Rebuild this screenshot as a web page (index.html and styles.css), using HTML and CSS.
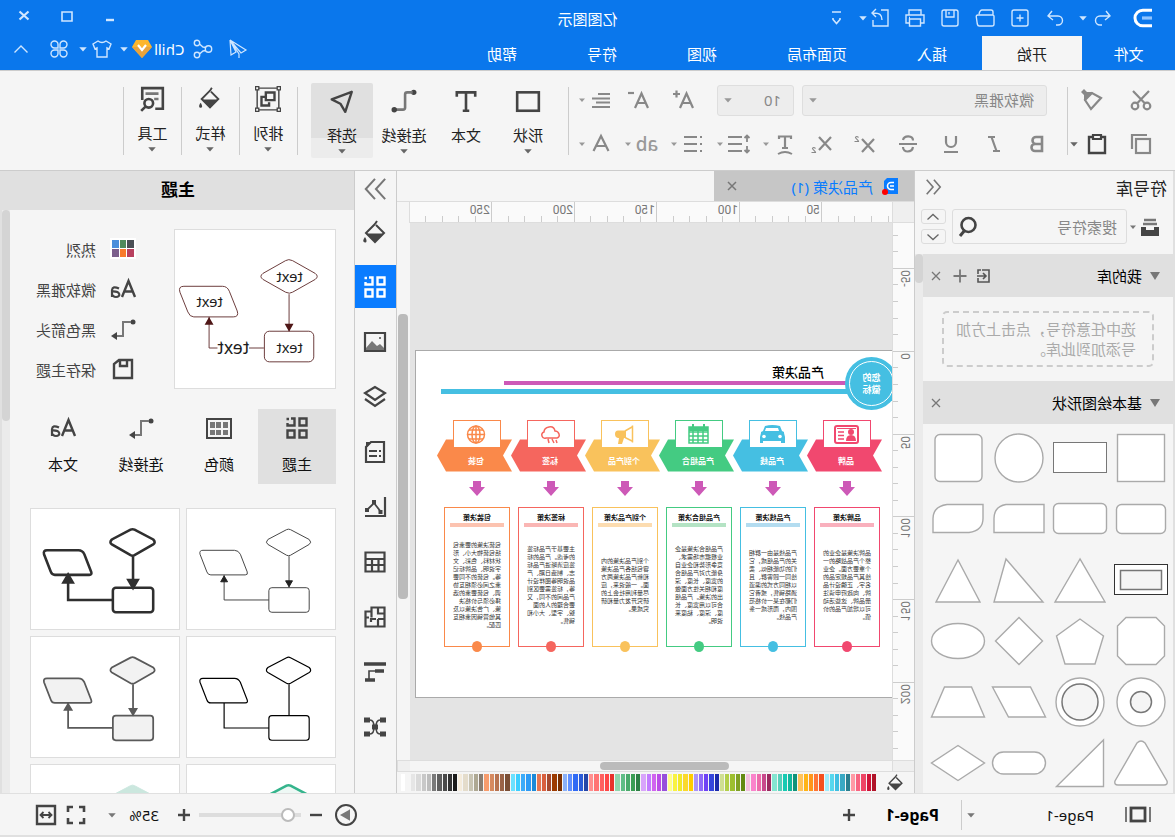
FILE: index.html
```html
<!DOCTYPE html>
<html lang="zh-CN">
<head>
<meta charset="utf-8">
<title>亿图图示</title>
<link rel="stylesheet" href="styles.css">
</head>
<body>
<svg class="sprite" aria-hidden="true">
  <symbol id="caret" viewBox="0 0 8 8"><path d="M1 2.500h6L4 6z" fill="currentColor" stroke="none"/></symbol>
  <symbol id="aa" viewBox="0 0 28 24"><path d="M2 20 8.500 4 15 20M4.500 14.500h8" stroke-width="2.400"/><path d="M18 11.500q6.500-3 7 1.500V20M25 14.500c-9-.5-9 5.500-4 5.500 2.500 0 4-2 4-3" stroke-width="2.200"/></symbol>
  <symbol id="conn" viewBox="0 0 28 24"><circle cx="4" cy="5" r="2.500" fill="currentColor" stroke="none"/><path d="M6 5h8v14h7" stroke-width="2" stroke="#777"/><path d="M20 15l6 4-6 4z" fill="currentColor" stroke="none"/></symbol>
  <symbol id="tiles" viewBox="0 0 24 24"><path d="M2.500 2.500h7v7h-7zM14.500 14.500h7v7h-7zM2.500 14.500h7v7h-7zM18 2.500h-3.500v7h7V7M20 3h2.500" stroke-width="2.400"/></symbol>
  <symbol id="bucket" viewBox="0 0 24 24"><path d="M11 5 3 13l9 9 9-9-9-9M12 4l-2-3" stroke-width="2"/><path d="M4 13.500h17L12 22z" fill="currentColor" stroke="none"/><path d="M22 17c3 4 1.500 5.500 0 5.500s-2.500-1.500 0-5.500z" fill="currentColor" stroke="none"/></symbol>
  <symbol id="flow-lines" viewBox="0 0 150 122"><path d="M45 21 26 31q-3 3 0 5l19 11q2 1 4 0l19-11q3-2 0-5L49 21q-2-1-4 0z"/><rect x="26" y="80" width="41" height="25" rx="3"/><path d="M102 42h32q4 0 3 4l-7 18q-1 3-4 3H91q-3 0-2-3l7-18q2-4 6-4z"/><path d="M46.500 48v32M67 92.500h45.500V67" fill="none"/></symbol>
  <symbol id="flow-heads" viewBox="0 0 150 122"><path d="M43 73h7l-3.500 6zM109 74h7l-3.500-6z"/></symbol>
</svg>

<div class="app">
  <header class="head">
    <div class="head-top">
      <div class="quick">
        <svg class="logo" viewBox="0 0 20 20"><path d="M1 2.200h9.200a7.800 7.800 0 0 1 0 15.600H1" stroke="#fff" stroke-width="3"/><path d="M1 10h10" stroke="#8fc4ff" stroke-width="3.200"/></svg>
        <button class="hb w24" aria-label="撤销"><svg viewBox="0 0 24 24"><path d="M9 5 5 10l5 4M5 10h10a4.500 4.500 0 0 1 0 9h-2"/></svg></button>
        <button class="hb w8" aria-label="撤销列表"><svg class="c8"><use href="#caret"/></svg></button>
        <button class="hb w35" aria-label="重做"><svg viewBox="0 0 24 24"><path d="M15 5l4 5-5 4M19 10H9a4.500 4.500 0 0 0 0 9h2"/></svg></button>
        <button class="hb w35" aria-label="新建"><svg viewBox="0 0 24 24"><rect x="4" y="4" width="16" height="16" rx="2"/><path d="M12 8.500v7M8.500 12h7"/></svg></button>
        <button class="hb w35" aria-label="打开"><svg viewBox="0 0 24 24"><path d="M4 9V6q0-2 2-2h9q2 0 3 4M4 9h15q2 0 1.700 2l-1 7q-.4 2-2 2H5q-2 0-2-2V10z"/></svg></button>
        <button class="hb w35" aria-label="保存"><svg viewBox="0 0 24 24"><rect x="4" y="4" width="16" height="16" rx="2"/><path d="M8 4v7h8V4M13 6v2.500"/></svg></button>
        <button class="hb w35" aria-label="打印"><svg viewBox="0 0 24 24"><path d="M6 9V4h12v5M6 17H3V9h18v8h-3M6.500 13h11v7h-11zM17 11.500h1"/></svg></button>
        <button class="hb w35" aria-label="导出"><svg viewBox="0 0 24 24"><path d="M11 4H4v16h15v-6M10 14c0-5 2-7 9-7M16 3l4 4-4 4"/></svg></button>
        <button class="hb w8 tuck" aria-label="导出列表"><svg class="c8"><use href="#caret"/></svg></button>
        <button class="hb w24 far" aria-label="自定义"><svg viewBox="0 0 24 24"><path d="M8 6h9M9 12v1.500l3.500 4 3.500-4V12" stroke-width="1.600"/></svg></button>
      </div>
      <h1 class="title">亿图图示</h1>
      <div class="win">
        <button class="hb" aria-label="最小化"><svg viewBox="0 0 24 24"><path d="M8 14h8" stroke-width="2.400"/></svg></button>
        <button class="hb" aria-label="最大化"><svg viewBox="0 0 24 24"><path d="M7 6h10v9H7z" stroke-width="1.600"/></svg></button>
        <button class="hb" aria-label="关闭"><svg viewBox="0 0 24 24"><path d="M7.500 5.500l9 8M16.500 5.500l-9 8" stroke-width="2.200"/></svg></button>
      </div>
    </div>
    <nav class="tabs">
      <button class="tab file">文件</button><button class="tab on">开始</button><button class="tab">插入</button><button class="tab">页面布局</button><button class="tab">视图</button><button class="tab">符号</button><button class="tab">帮助</button>
      <div class="acct">
        <button class="hb w36" aria-label="发送"><svg viewBox="0 0 24 24"><path d="M20 3 4 13l5 3zM20 3l-1 15-5-3zM20 3l-9 14v4" stroke-width="1.200"/></svg></button>
        <button class="hb w34" aria-label="分享"><svg viewBox="0 0 24 24"><circle cx="6.500" cy="12" r="3.200"/><circle cx="18" cy="6" r="2.700"/><circle cx="18" cy="18" r="2.700"/><path d="M9 10.500 12 10l3.500-3M9 13.500l3 .5 3.500 3"/></svg></button>
        <span class="user">Chill</span>
        <svg class="gem" viewBox="0 0 22 20"><path d="M5 1h12l4 7-10 11L1 8z" fill="#fdb62d"/><path d="M1 8h20L11 19z" fill="#e8a33d"/><path d="M7 6l4 5 4-5" stroke="#fff" stroke-width="2.200"/></svg>
        <button class="hb w14" aria-label="账户"><svg class="c8"><use href="#caret"/></svg></button>
        <button class="hb w30" aria-label="皮肤"><svg viewBox="0 0 24 24"><path d="M8 4q4 3 8 0l5 3-2 5-2-1v9H7v-9l-2 1-2-5z"/></svg></button>
        <button class="hb w8" aria-label="皮肤列表"><svg class="c8"><use href="#caret"/></svg></button>
        <button class="hb w40" aria-label="应用"><svg viewBox="0 0 24 24"><path d="M11 11V7.500A3.500 3.500 0 1 0 7.500 11zM13 11V7.500a3.500 3.500 0 1 1 3.500 3.500zM11 13v3.500A3.500 3.500 0 1 1 7.500 13zM13 13v3.500a3.500 3.500 0 1 0 3.500-3.500z"/></svg></button>
        <button class="hb w36" aria-label="收起功能区"><svg viewBox="0 0 24 24"><path d="M5.500 15.500 12 9l6.500 6.500"/></svg></button>
      </div>
    </nav>
  </header>

  <section class="ribbon">
    <div class="grp clip">
      <div class="line"><button class="rb w50" aria-label="剪切"><svg viewBox="0 0 24 24"><circle cx="6" cy="18" r="3.300"/><circle cx="18" cy="18" r="3.300"/><path d="M8 15.500 20 3M16 15.500 4 3"/></svg></button><button class="rb w50" aria-label="格式刷"><svg viewBox="0 0 24 24"><path d="M3 10l9-5 7 7-6 9z"/><path d="M11 4l6 0 3-3 3 3-3 3v6z" fill="currentColor" stroke="none"/></svg></button></div>
      <div class="line"><button class="rb w50" aria-label="复制"><svg viewBox="0 0 24 24"><rect x="3" y="7" width="14" height="14"/><path d="M6 3h15v14"/></svg></button><button class="rb w38 dark" aria-label="粘贴"><svg viewBox="0 0 24 24"><path d="M8 5H4v16h16V5h-4" stroke-width="2.400"/><path d="M8 3h8v4H8z"/></svg></button><button class="rb w8" aria-label="粘贴选项"><svg class="c8"><use href="#caret"/></svg></button></div>
    </div>
    <i class="bar"></i>
    <div class="grp font">
      <div class="line"><span class="pick fam"><select aria-label="字体"><option>微软雅黑</option></select><svg class="c8"><use href="#caret"/></svg></span><span class="pick size"><select aria-label="字号"><option>10</option></select><svg class="c8"><use href="#caret"/></svg></span><button class="rb w45" aria-label="增大字号"><svg viewBox="0 0 24 24"><path d="M3 20 9.500 5.500 16 20M5.500 15h8"/><path d="M16 6h7M19.500 2.500v7"/></svg></button><button class="rb w45" aria-label="减小字号"><svg viewBox="0 0 24 24"><path d="M3 20 9.500 5.500 16 20M5.500 15h8"/><path d="M17 5h6"/></svg></button><span class="combo"><button class="rb w30" aria-label="对齐"><svg viewBox="0 0 24 24"><path d="M3 6h12M3 10.500h18M3 14.500h14M3 19h18"/></svg></button><svg class="c8"><use href="#caret"/></svg></span></div>
      <div class="line"><button class="rb w43" aria-label="加粗"><svg viewBox="0 0 24 24"><path d="M7 5h6a3 3 0 0 1 0 7H7zM7 12h7a3.500 3.500 0 0 1 0 7H7z" stroke-width="2.600"/></svg></button><button class="rb w43" aria-label="斜体"><svg viewBox="0 0 24 24"><path d="M11 5h7M6 19h7M14.500 5 9.500 19"/></svg></button><button class="rb w43" aria-label="下划线"><svg viewBox="0 0 24 24"><path d="M7 4v6a5 5 0 0 0 10 0V4M5 20h14"/></svg></button><button class="rb w43" aria-label="删除线"><svg viewBox="0 0 24 24"><path d="M17 8c-1-5-10-5-10 .5M7 15c1 6 10 6 10 0M3 12h18"/></svg></button><button class="rb w43" aria-label="上标"><svg viewBox="0 0 24 24"><path d="M3 7l12 13M15 7 3 20"/><path d="M18.500 5.500q2-2 3 0c0 1-3 2.500-3 4h4" stroke-width="1.200"/></svg></button><button class="rb w43" aria-label="下标"><svg viewBox="0 0 24 24"><path d="M3 5l12 13M15 5 3 18"/><path d="M18.500 16.500q2-2 3 0c0 1-3 2.500-3 4h4" stroke-width="1.200"/></svg></button><span class="combo"><button class="rb w30" aria-label="文字效果"><svg viewBox="0 0 24 24"><path d="M6 7V4.500h12V7M12 4v12M9 16h6"/><path d="M5 22q7-4 14 0" stroke-width="2"/></svg></button><svg class="c8"><use href="#caret"/></svg></span><span class="combo"><button class="rb w30" aria-label="行距"><svg viewBox="0 0 24 24"><path d="M9 5h14M9 12h14M9 19h14"/><path d="M4 3v7M1.500 6 4 3.500 6.500 6M4 14v7M1.500 18 4 20.500 6.500 18" stroke-width="1.800"/></svg></button><svg class="c8"><use href="#caret"/></svg></span><span class="combo"><button class="rb w30" aria-label="项目符号"><svg viewBox="0 0 24 24"><path d="M3 5h2M3 12h2M3 19h2M8 5h13M8 12h13M8 19h13"/></svg></button><svg class="c8"><use href="#caret"/></svg></span><span class="combo"><button class="rb w30 glyph" aria-label="文字样式">ab</button><svg class="c8"><use href="#caret"/></svg></span><span class="combo"><button class="rb w30" aria-label="字体颜色"><svg viewBox="0 0 24 24"><path d="M4.500 19 12 4l7.500 15M7.500 14h9"/></svg></button><svg class="c8"><use href="#caret"/></svg></span></div>
    </div>
    <i class="bar"></i>
    <div class="bigs insert">
      <button class="big"><svg class="ic" viewBox="0 0 24 24"><rect x="2" y="4" width="20" height="17" stroke-width="2.400"/></svg><span>形状</span><svg class="c8"><use href="#caret"/></svg></button>
      <button class="big"><svg class="ic" viewBox="0 0 24 24"><path d="M3.500 8V4h17v4M12 4v17M9 21h6" stroke-width="2.400"/></svg><span>文本</span></button>
      <button class="big"><svg class="ic" viewBox="0 0 24 24"><circle cx="3" cy="4" r="2.500" fill="currentColor" stroke="none"/><path d="M4 4h5q2 0 2 2v12q0 2 2 2h7" stroke="#777"/><circle cx="21" cy="20" r="2.500" fill="currentColor" stroke="none"/></svg><span>连接线</span><svg class="c8"><use href="#caret"/></svg></button>
      <button class="big sel"><svg class="ic" viewBox="0 0 24 24"><path d="M3 3.500 21.500 10.500 13.500 14.500 9 22z" stroke-width="2.200" stroke-linejoin="round"/></svg><span>选择</span><svg class="c8"><use href="#caret"/></svg></button>
    </div>
    <i class="bar"></i>
    <button class="big slim"><svg class="ic" viewBox="0 0 24 24"><path d="M2 2h20v20H2z" stroke-width="1.300"/><path d="M6 6h8v7H6zM15 10h3v8h-7v-3" stroke-width="2.200"/><path d="M.5.500h3v3h-3zM20.500.500h3v3h-3zM.5 20.500h3v3h-3zM20.500 20.500h3v3h-3z" fill="#f5f5f5" stroke-width="1.200"/></svg><span>排列</span><svg class="c8"><use href="#caret"/></svg></button>
    <i class="bar"></i>
    <button class="big slim"><svg class="ic" viewBox="-2 -1 28 28"><use href="#bucket" width="24" height="24"/></svg><span>样式</span><svg class="c8"><use href="#caret"/></svg></button>
    <i class="bar"></i>
    <button class="big slim"><svg class="ic" viewBox="0 0 24 24"><path d="M9 21H2V2h19v11"/><path d="M6 7h12M6 12h4" stroke="#777"/><circle cx="15" cy="16" r="4"/><path d="M18 19l4 4"/></svg><span>工具</span><svg class="c8"><use href="#caret"/></svg></button>
    <i class="bar"></i>
  </section>

  <main class="work">
    <aside class="lib">
      <div class="lib-head"><h2>符号库</h2><button class="pb" aria-label="折叠"><svg viewBox="0 0 20 20"><path d="M9 2 2 10l7 8M17 2l-7 8 7 8" stroke-width="1.800"/></svg></button></div>
      <div class="find">
        <button class="pb w30 dark" aria-label="选择库"><svg viewBox="0 0 20 20"><path d="M1 10h5v3h8v-3h5v9H1z" fill="currentColor" stroke="none"/><path d="M3 7h14M4 3h12" stroke="#777" stroke-width="2.400"/></svg></button><svg class="c8"><use href="#caret"/></svg>
        <label class="search"><input type="text" placeholder="搜索符号" aria-label="搜索符号"><svg viewBox="0 0 22 22"><circle cx="9.500" cy="9" r="7" stroke-width="2.600" transform="translate(2 0)"/><path d="M15 14l5 6" stroke-width="3"/></svg></label>
        <span class="updown"><button aria-label="上移"><svg viewBox="0 0 14 8"><path d="M1.500 6.500 7 1.500l5.500 5"/></svg></button><button aria-label="下移"><svg viewBox="0 0 14 8"><path d="M1.500 1.500 7 6.500l5.500-5"/></svg></button></span>
      </div>
      <div class="lib-scroll">
        <div class="lib-body">
          <div class="sec"><svg class="tri" viewBox="0 0 10 8"><path d="M0 0h10L5 8z"/></svg><h3>我的库</h3><button class="pb" aria-label="导入"><svg viewBox="0 0 16 16"><path d="M10 2H3v12h11V10M14 6V2h-3M15 8H6M9 5 6 8l3 3" stroke-width="1.600"/></svg></button><button class="pb" aria-label="添加"><svg viewBox="0 0 16 16"><path d="M8 1.500v13M1.500 8h13" stroke-width="1.800"/></svg></button><button class="pb" aria-label="关闭"><svg viewBox="0 0 16 16"><path d="M4 4l8 8M12 4l-8 8" stroke-width="1.300"/></svg></button></div>
          <div class="hintwrap"><p class="hint">选中任意符号，点击上方加号添加到此库。</p></div>
          <div class="sec"><svg class="tri" viewBox="0 0 10 8"><path d="M0 0h10L5 8z"/></svg><h3>基本绘图形状</h3><button class="pb" aria-label="关闭"><svg viewBox="0 0 16 16"><path d="M4 4l8 8M12 4l-8 8" stroke-width="1.300"/></svg></button></div>
          <div class="shapes">
            <svg viewBox="-30 -30 60 60"><rect x="-23.500" y="-23.500" width="47" height="47"/></svg>
            <svg viewBox="-30 -30 60 60"><rect class="dk" x="-26.500" y="-15.500" width="53" height="30"/></svg>
            <svg viewBox="-30 -30 60 60"><circle r="24"/></svg>
            <svg viewBox="-30 -30 60 60"><rect x="-24" y="-23.500" width="47" height="47" rx="5"/></svg>
            <svg viewBox="-30 -30 60 60"><rect x="-24.500" y="-14.500" width="49" height="29" rx="5"/></svg>
            <svg viewBox="-30 -30 60 60"><rect x="-26.500" y="-15.500" width="53" height="30" rx="5"/></svg>
            <svg viewBox="-30 -30 60 60"><path d="M-25-14.500h38q12 2 12 14v14h-50z"/></svg>
            <svg viewBox="-30 -30 60 60"><path d="M-25-14.500h36q14 2 14 14v14h-36q-14-2-14-14z"/></svg>
            <svg viewBox="-30 -30 60 60"><rect class="bk" x="-26.500" y="-15.500" width="53" height="30"/><rect class="in dk" x="-20.500" y="-9.500" width="41" height="19"/></svg>
            <svg viewBox="-30 -30 60 60"><path d="M0-21 25 22h-50z"/></svg>
            <svg viewBox="-30 -30 60 60"><path d="M13-21 25 22h-49z"/></svg>
            <svg viewBox="-30 -30 60 60"><path d="M0-20 22 22h-44z"/></svg>
            <svg viewBox="-30 -30 60 60"><path d="M-15-23.500h30l8.500 8.500v30l-8.500 8.500h-30l-8.500-8.500v-30z"/></svg>
            <svg viewBox="-30 -30 60 60"><path d="M0-22 23.500-5 15 23h-30l-8.500-28z"/></svg>
            <svg viewBox="-30 -30 60 60"><path d="M0-23.500 23.500 0 0 23.500-23.500 0z"/></svg>
            <svg viewBox="-30 -30 60 60"><ellipse rx="26.500" ry="17.500"/></svg>
            <svg viewBox="-30 -30 60 60"><circle r="24"/><circle class="in dk" r="10.500"/></svg>
            <svg viewBox="-30 -30 60 60"><circle r="24"/><circle class="in dk" r="18"/></svg>
            <svg viewBox="-30 -30 60 60"><path d="M26.500-15h-38l-15 30h37z"/></svg>
            <svg viewBox="-30 -30 60 60"><path d="M-13.500-15h27l13 30h-53z"/></svg>
            <svg viewBox="-30 -30 60 60"><path d="M-4-20q4-4 8 0l22 38q1 4-3 4h-46q-4 0-3-4z"/></svg>
            <svg viewBox="-30 -30 60 60"><path d="M-23.500-23v46.500h47z"/></svg>
            <svg viewBox="-30 -30 60 60"><rect x="-26.500" y="-11" width="53" height="22" rx="11"/></svg>
            <svg viewBox="-30 -30 60 60"><path d="M0-17.500 26.500 0 0 17.500-26.500 0z"/></svg>
          </div>
        </div>
        <div class="track"><i></i></div>
      </div>
    </aside>

    <section class="doc">
      <div class="doctabs"><div class="doctab"><svg class="dicon" viewBox="0 0 18 18"><path d="M2 1h11l3 3v13H2z" fill="#0a7cff"/><path d="M6 5.500h3a3.500 3.500 0 0 1 0 7H6M6 9h4" stroke="#fff" stroke-width="1.600"/><circle cx="15" cy="15" r="3" fill="red"/></svg><span>产品决策 (1)</span><button class="pb" aria-label="关闭"><svg viewBox="0 0 16 16"><path d="M4 4l8 8M12 4l-8 8" stroke-width="1.500"/></svg></button></div></div>
      <div class="stage">
        <div class="corner"></div>
        <svg class="rulerh"><path d="M70.500 0v20M152.500 0v20M235.500 0v20M317.500 0v20M400.500 0v20M3.500 14v6M20.500 14v6M37.500 14v6M53.500 14v6M86.500 14v6M103.500 14v6M119.500 14v6M136.500 14v6M169.500 14v6M185.500 14v6M202.500 14v6M218.500 14v6M251.500 14v6M268.500 14v6M284.500 14v6M301.500 14v6M334.500 14v6M350.500 14v6M367.500 14v6M383.500 14v6M416.500 14v6M433.500 14v6M449.500 14v6M466.500 14v6"/><text x="72" y="12">50</text><text x="154" y="12">100</text><text x="237" y="12">150</text><text x="319" y="12">200</text><text x="402" y="12">250</text></svg>
        <div class="vtop"></div>
        <svg class="rulerv"><path d="M0 45.500h22M0 128.500h22M0 211.500h22M0 293.500h22M0 376.500h22M0 459.500h22M16 12.500h6M16 28.500h6M16 61.500h6M16 78.500h6M16 95.500h6M16 111.500h6M16 144.500h6M16 161.500h6M16 178.500h6M16 194.500h6M16 227.500h6M16 244.500h6M16 260.500h6M16 277.500h6M16 310.500h6M16 326.500h6M16 343.500h6M16 360.500h6M16 393.500h6M16 409.500h6M16 426.500h6M16 442.500h6M16 475.500h6M16 492.500h6M16 508.500h6M16 525.500h6"/><g text-anchor="end"><text transform="translate(13 47) rotate(-90)">-50</text><text transform="translate(13 130) rotate(-90)">0</text><text transform="translate(13 213) rotate(-90)">50</text><text transform="translate(13 295) rotate(-90)">100</text><text transform="translate(13 378) rotate(-90)">150</text><text transform="translate(13 461) rotate(-90)">200</text></g></svg>
        <div class="canvas">
          <article class="page">
            <div class="badge"><span>您的<br>徽标</span></div>
            <h2 class="ptitle">产品决策</h2>
            <i class="rule mag"></i><i class="rule blu"></i>
            <div class="cols">
              <div class="col c1"><svg class="chev" viewBox="0 0 76 52"><path d="M0 19.500h66l9 16-9 16H0l9-16z"/><rect x="11.500" y=".5" width="47" height="27"/><g class="pic"><rect x="24" y="6" width="23" height="17" rx="2"/><circle class="f" cx="31" cy="12" r="3"/><path class="f" d="M26 21q0-6 5-6t5 6zM26 8h19v1H26z"/><path d="M38 12h6M38 15.500h6M38 19h6"/></g><text x="36" y="44">品牌</text></svg><svg class="down" viewBox="0 0 16 15"><path d="M4 0h8v6h4l-8 9-8-9h4z"/></svg><div class="box"><b>品牌决策</b><p>品牌决策是企业的<br>整个产品战略的一<br>个重要方面。企业<br>给其产品规定品的<br>名字、正确设计品<br>牌、向政府申请注<br>册品牌、这些活动<br>可以增加产品的价<br>值。</p></div></div>
              <div class="col c2"><svg class="chev" viewBox="0 0 76 52"><path d="M0 19.500h66l9 16-9 16H0l9-16z"/><rect x="11.500" y=".5" width="47" height="27"/><g class="pic"><path class="f" d="M24 12l2-1 2-5q8-2 15 0l2 5 2 1v1l1 4v6h-3v-2H27v2h-4v-6l1-4z"/><path d="M29 11l1-3h12l1 3z" fill="#fff" stroke="none"/><circle cx="28" cy="16.500" r="1.800" fill="#fff" stroke="none"/><circle cx="44" cy="16.500" r="1.800" fill="#fff" stroke="none"/></g><text x="36" y="44">产品线</text></svg><svg class="down" viewBox="0 0 16 15"><path d="M4 0h8v6h4l-8 9-8-9h4z"/></svg><div class="box"><b>产品线决策</b><p>产品线是由一群相<br>关的产品组成，它<br>们的功能相似、卖<br>给同一顾客群、且<br>以相同方式的渠道<br>通路销售，或者它<br>们都在某一价格范<br>围内，而形成一条<br>产品线。</p></div></div>
              <div class="col c3"><svg class="chev" viewBox="0 0 76 52"><path d="M0 19.500h66l9 16-9 16H0l9-16z"/><rect x="11.500" y=".5" width="47" height="27"/><g class="pic"><path d="M26 7h19v16H26zM26 12h19M26 16h19M26 20h19M31 11v12M36 11v12M41 11v12"/><path class="f" d="M26 7h19v4H26zM29 4h2v4h-2zM40 4h2v4h-2z"/></g><text x="36" y="44">产品组合</text></svg><svg class="down" viewBox="0 0 16 15"><path d="M4 0h8v6h4l-8 9-8-9h4z"/></svg><div class="box"><b>产品组合决策</b><p>产品组合决策是企<br>业根据市场需求、<br>竞争形势和企业自<br>身能力对产品组合<br>的宽度、长度、深<br>度和相关性方面做<br>出的决策。产品组<br>合可以用宽度、长<br>度、深度、粘度来<br>说明。</p></div></div>
              <div class="col c4"><svg class="chev" viewBox="0 0 76 52"><path d="M0 19.500h66l9 16-9 16H0l9-16z"/><rect x="11.500" y=".5" width="47" height="27"/><g class="pic"><path d="M27.500 5.500v17M28 7l7 4M28 21l7-3.500"/><path class="f" d="M34 10.500h8q3 0 3 3.500t-3 4h-1l1 6h-4l-2-6h-2z"/></g><text x="36" y="44">个别产品</text></svg><svg class="down" viewBox="0 0 16 15"><path d="M4 0h8v6h4l-8 9-8-9h4z"/></svg><div class="box"><b>个别产品决策</b><p>个别产品决策的内<br>容包括各产品决策<br>和新产品决策两方<br>面。一般说来，应<br>尽量利用社会上的<br>研究开发力量和研<br>究成果。</p></div></div>
              <div class="col c5"><svg class="chev" viewBox="0 0 76 52"><path d="M0 19.500h66l9 16-9 16H0l9-16z"/><rect x="11.500" y=".5" width="47" height="27"/><g class="pic"><path d="M29 18q-3-1-2-4t4-3q1-5 6-4t5 5q3 1 2 4t-4 2zM30 20l-1 3M34 19l-2 4M38 19l-1 4"/></g><text x="36" y="44">标签</text></svg><svg class="down" viewBox="0 0 16 15"><path d="M4 0h8v6h4l-8 9-8-9h4z"/></svg><div class="box"><b>标签决策</b><p>主要基于产品标签<br>的考虑。产品的标<br>签应清晰进产品标<br>志、制造日期、产<br>品说明等图样设计<br>等，标签需要区别<br>产品间的不同，又<br>要合理的人的面<br>貌、字型、大小和<br>销售。</p></div></div>
              <div class="col c6"><svg class="chev" viewBox="0 0 76 52"><path d="M0 19.500h66l9 16-9 16H0l9-16z"/><rect x="11.500" y=".5" width="47" height="27"/><g class="pic"><circle cx="36" cy="14.500" r="8.500"/><ellipse cx="36" cy="14.500" rx="4" ry="8.500"/><path d="M36 6v17M27 14.500h18M29 10h14M29 19h14"/></g><text x="36" y="44">包装</text></svg><svg class="down" viewBox="0 0 16 15"><path d="M4 0h8v6h4l-8 9-8-9h4z"/></svg><div class="box"><b>包装决策</b><p>包装决策的要素包<br>括包装物大小、形<br>状材料、色彩、文<br>字说明、品牌标记<br>等。包装的不同要<br>素之间必须相互协<br>调、包装要素的选<br>择必须与价格决<br>策、广告决策以及<br>其他营销因素相互<br>匹配。</p></div></div>
            </div>
          </article>
        </div>
        <div class="vscroll"><i></i></div>
        <div class="hpad"></div><div class="hscroll"><i></i></div><div class="hpad end"></div>
      </div>
      <div class="palette"><button class="pb dark" aria-label="填充颜色"><svg viewBox="0 0 24 24"><use href="#bucket"/></svg></button><div class="swatches" id="swatches"></div></div>
    </section>

    <nav class="side">
      <button class="fold" aria-label="收起"><svg viewBox="0 0 26 26"><path d="M2 2l10 11L2 24M13 2l10 11-10 11" stroke="#777"/></svg></button>
      <button aria-label="填充"><svg viewBox="0 0 24 24"><use href="#bucket"/></svg></button>
      <button class="on" aria-label="主题"><svg viewBox="0 0 24 24"><use href="#tiles"/></svg></button>
      <button aria-label="图片"><svg viewBox="0 0 24 24"><path d="M2 3h20v18H2z"/><path d="M3 20v-2l4-4 3 2 5-5 6 7v2z" fill="#777" stroke="none"/><path d="M6 7h2v2H6z" fill="#777" stroke="none"/></svg></button>
      <button aria-label="图层"><svg viewBox="0 0 24 24"><path d="M12 2l10 6-10 7L2 8zM2 14l10 7 10-7"/></svg></button>
      <button aria-label="页面"><svg viewBox="0 0 24 24"><path d="M3 2h13l5 5v15H3z"/><path d="M16 2h5v6z" fill="currentColor" stroke="none"/><path d="M6 11h2M10 11h8M6 16h2M10 16h8"/></svg></button>
      <button aria-label="图表"><svg viewBox="0 0 24 24"><path d="M2 2v19h20"/><path d="M6 17l7-9 7 7" stroke-width="1.800"/><path d="M4.500 15h4v4h-4zM11 5h4v4h-4zM18 13h4v4h-4z" fill="currentColor" stroke="none"/></svg></button>
      <button aria-label="表格"><svg viewBox="0 0 24 24"><path d="M2.500 2.500h19v19h-19zM2 9h20M2 15h20M8.500 9v13M15 9v13"/></svg></button>
      <button aria-label="平面图"><svg viewBox="0 0 24 24"><path d="M2.500 2.500h13v4h6v15h-19zM9 2.500v6H2.500M9 14v7.500M2.500 14H9M15.500 6.500v6M11 14h5v3M22 12.500h-4"/></svg></button>
      <button aria-label="甘特图"><svg viewBox="0 0 24 24"><path d="M1 4h22M3 11h9M12 20h10" stroke-width="3.600"/><path d="M12 11h6v8" stroke-width="1.600"/></svg></button>
      <button aria-label="思维导图"><svg viewBox="0 0 24 24"><path d="M1 5h6M1 19h6M17 5h6M17 19h6M9 12h6" stroke-width="5"/><path d="M7 5q4 0 4 7t-4 7M17 5q-4 0-4 7t4 7" stroke-width="1.600"/></svg></button>
    </nav>

    <aside class="theme">
      <h2>主题</h2>
      <div class="theme-scroll">
        <div class="theme-body">
          <div class="top">
            <svg class="preview" viewBox="0 0 162 160"><g fill="none" stroke="#6b3b3b"><path d="M43 31 20 44q-4 3 0 6l23 13q3 2 7 0l23-13q4-3 0-6L50 31q-3-2-7 0z"/><rect x="21.500" y="102.500" width="50" height="31" rx="5"/><path d="M114 57h39q6 0 4 6l-8 20q-2 5-6 5h-40q-6 0-4-6l8-20q2-5 7-5z"/><path d="M46.500 65v37M72 119.500h55.500V88"/></g><path d="M42 95h9l-4.500 8zM123 96h9l-4.500-8z" fill="#4f1717"/><path d="M87 110h32v18H87z" fill="#fff"/><g text-anchor="middle" fill="#1d1d1d"><text x="46" y="53">text</text><text x="46" y="125">text</text><text x="127" y="78">text</text><text class="lg" x="103" y="126">text</text></g></svg>
            <div class="props">
              <button><svg viewBox="0 0 28 24"><path d="M1 1h26v21H1z" fill="#fff" stroke="none"/><g stroke="none"><path d="M3 3h7v8H3z" fill="#4a4f55"/><path d="M11 3h6v8h-6z" fill="#4f8a5b"/><path d="M18 3h7v8h-7z" fill="#4b8edb"/><path d="M3 12h7v8H3z" fill="#b8405f"/><path d="M11 12h6v8h-6z" fill="#f97a2b"/><path d="M18 12h7v8h-7z" fill="#7c5f8c"/></g></svg>热烈</button>
              <button><svg viewBox="0 0 28 24"><use href="#aa"/></svg>微软雅黑</button>
              <button><svg viewBox="0 0 28 24"><use href="#conn"/></svg>黑色箭头</button>
              <button><svg viewBox="0 0 28 24"><path d="M5 3h13l5 4v14H5zM10 4v5h7V4" stroke-width="2.400"/></svg>保存主题</button>
            </div>
          </div>
          <div class="kinds">
            <button class="on"><svg viewBox="0 0 28 24"><use href="#tiles" x="2" width="24" height="24"/></svg>主题</button>
            <button><svg viewBox="0 0 28 24"><rect x="2" y="3" width="24" height="19"/><path d="M5 6h5v6H5zM12 6h5v6h-5zM18 6h5v6h-5zM5 14h5v5H5zM12 14h5v5h-5zM18 14h5v5h-5z" fill="#777" stroke="none"/></svg>颜色</button>
            <button><svg viewBox="0 0 28 24"><use href="#conn"/></svg>连接线</button>
            <button><svg viewBox="0 0 28 24"><use href="#aa"/></svg>文本</button>
          </div>
          <div class="cards">
            <svg class="flow thin" viewBox="0 0 150 122"><use href="#flow-lines"/><use class="h" href="#flow-heads"/></svg>
            <svg class="flow thick" viewBox="0 0 150 122"><use href="#flow-lines"/><use class="h" href="#flow-heads"/></svg>
            <svg class="flow plain" viewBox="0 0 150 122"><use href="#flow-lines"/></svg>
            <svg class="flow gray" viewBox="0 0 150 122"><use href="#flow-lines"/><use class="h" href="#flow-heads"/></svg>
            <svg class="flow green" viewBox="0 0 150 122"><use href="#flow-lines"/></svg>
            <svg class="flow mint" viewBox="0 0 150 122"><use href="#flow-lines"/></svg>
          </div>
        </div>
        <div class="track"><i></i></div>
      </div>
    </aside>
  </main>

  <footer class="status">
    <button class="pb dark" aria-label="页面列表"><svg class="i28" viewBox="0 0 28 24"><path d="M2 4v15M26 4v15" stroke="#777"/><rect x="7" y="5" width="14" height="13" stroke-width="2.800"/></svg></button>
    <span class="pick pg"><select aria-label="页面"><option>Page-1</option></select><svg class="c8"><use href="#caret"/></svg></span>
    <i class="bar"></i>
    <button class="pagetab">Page-1</button>
    <button class="pb dark plus" aria-label="添加页面"><svg viewBox="0 0 16 16"><path d="M8 2v12M2 8h12" stroke-width="2.400"/></svg></button>
    <div class="zoom">
      <button class="pb dark" aria-label="演示"><svg class="i24" viewBox="0 0 24 24"><circle cx="12" cy="12" r="10"/><path d="M9 8l7 4-7 4z" fill="#777" stroke="#777"/></svg></button>
      <button class="pb dark out" aria-label="缩小"><svg viewBox="0 0 16 16"><path d="M2 8h12" stroke-width="2.400"/></svg></button>
      <input type="range" min="0" max="100" value="7" aria-label="缩放">
      <button class="pb dark" aria-label="放大"><svg viewBox="0 0 16 16"><path d="M8 2v12M2 8h12" stroke-width="2.400"/></svg></button>
      <span class="pick pct"><select aria-label="缩放比例"><option>35%</option></select><svg class="c8"><use href="#caret"/></svg></span>
      <button class="pb dark full" aria-label="全屏"><svg class="i24" viewBox="0 0 24 24"><path d="M4 9V4h5M15 4h5v5M20 15v5h-5M9 20H4v-5" stroke-width="2.600"/></svg></button>
      <button class="pb dark" aria-label="适合宽度"><svg class="i24" viewBox="0 0 24 24"><path d="M3 3h18v18H3z" stroke-width="2.400"/><path d="M7 12h10M9.500 9l-3 3 3 3M14.500 9l3 3-3 3" stroke-width="1.800"/></svg></button>
    </div>
  </footer>
</div>
<script src="script.js"></script>
</body>
</html>
```

FILE: styles.css
```css
* { box-sizing: border-box; }
body { margin: 0; background: #e0e0e0; }
body, button, input, select { font-family: "Noto Sans", "Noto Sans CJK SC", sans-serif; font-size: 15px; }
h1, h2, h3, p { margin: 0; font-weight: 400; }
button { border: 0; padding: 0; background: none; color: inherit; display: flex; align-items: center; justify-content: center; }
svg { display: block; fill: none; stroke: currentColor; stroke-width: 2; overflow: hidden; flex: none; }
.sprite { position: absolute; width: 0; height: 0; }
.c8 { width: 8px; height: 8px; color: #999; }

.app { height: 100vh; display: flex; flex-direction: column; overflow: hidden; transform: scaleX(-1); color: #222; background: #f5f5f5; border-bottom: 2px solid #e0e0e0; }

/* header */
.head { background: #0a77ec; color: #fff; }
.head-top { display: grid; grid-template-columns: 1fr auto 1fr; height: 36px; align-items: center; }
.quick { display: flex; align-items: center; padding-left: 22px; }
.logo { width: 20px; height: 20px; margin-right: 18px; }
.hb { height: 24px; color: #cfe6ff; }
.hb svg { width: 24px; height: 24px; stroke-width: 1.400; }
.hb .c8 { width: 10px; height: 10px; color: #cfe6ff; }
.w8 { width: 8px; } .w14 { width: 14px; } .w24 { width: 24px; } .w30 { width: 30px; } .w34 { width: 34px; } .w35 { width: 35px; }
.w36 { width: 36px; } .w38 { width: 38px; } .w40 { width: 40px; } .w43 { width: 43px; } .w45 { width: 45px; } .w50 { width: 50px; }
.w24 + .w8 { margin: 0 6px 0 4px; }
.tuck { margin-left: -4px; }
.far { margin-left: 10px; }
.title { font-size: 15px; }
.win { display: flex; justify-content: flex-end; padding-right: 3px; }
.win .hb { width: 43px; }
.tabs { display: flex; height: 34px; }
.tab { padding: 0 35px; white-space: nowrap; }
.tab.file { padding: 0; width: 93px; }
.tab.on { background: #f5f5f5; color: #222; }
.acct { margin-left: auto; display: flex; align-items: center; padding: 0 3px 8px 0; }
.user { padding: 0 1px 0 2px; }
.gem { width: 22px; height: 20px; stroke: none; }

/* ribbon */
.ribbon { display: flex; height: 101px; padding-left: 1px; border: solid #ccc; border-width: 1px 0; align-items: center; }
.bar { width: 1px; height: 68px; background: #ccc; }
.grp { align-self: stretch; padding-top: 7px; }
.line { display: flex; height: 44px; align-items: center; }
.clip { width: 106px; padding-left: 8px; }
.font { width: 498px; }
.font .line { padding-left: 8px; }
.font .line:first-child { padding-left: 20px; }
.rb { height: 34px; color: #888; }
.rb svg { width: 24px; height: 24px; stroke-width: 2.200; }
.rb .c8 { width: 10px; height: 10px; color: #666; }
.dark, .rb.dark { color: #444; }
.glyph { font-size: 19px; font-weight: 500; color: #999; }
.combo { display: flex; align-items: center; width: 38px; margin-left: 8px; }
.w43 + .combo, .w45 + .combo { margin-left: 1px; }
.pick { position: relative; display: flex; align-items: center; }
.pick select { appearance: none; width: 100%; height: 100%; border: 0; background: none; color: inherit; padding: 0; }
.pick .c8 { position: absolute; right: 5px; width: 10px; height: 10px; pointer-events: none; }
.fam, .size { height: 31px; border: 1px solid #dedede; border-radius: 3px; background: #ededed; color: #888; }
.fam { width: 245px; padding-left: 12px; }
.size { width: 77px; margin: 0 10px 0 8px; padding-left: 12px; }
.bigs { display: flex; }
.insert { padding: 0 13px 0 9px; }
.big { width: 62px; height: 75px; flex-direction: column; justify-content: flex-start; padding-top: 5px; border-radius: 2px; }
.slim { width: 57px; padding-top: 3px; }
.big .ic { width: 26px; height: 26px; color: #444; stroke-width: 2.400; }
.big span { margin-top: 10px; line-height: 22px; }
.big .c8 { color: #666; width: 10px; height: 10px; }
.big.sel { background: linear-gradient(#e0e0e0 55px, #ececec 55px); }

/* work area */
.work { flex: 1; min-height: 0; display: flex; border: solid #e0e0e0; border-width: 0 2px 1px; }
.pb { color: #777; }
.pb.dark { color: #444; }
.pb svg { width: 16px; height: 16px; }
.track { width: 8px; background: #ebebeb; }
.track i { display: block; border-radius: 4px; background: #d4d4d4; }

/* symbol library */
.lib { width: 259px; display: flex; flex-direction: column; border-right: 1px solid #ccc; }
.lib-head { display: flex; height: 34px; align-items: center; justify-content: space-between; padding: 0 9px 2px 6px; }
.lib-head h2 { font-size: 17px; }
.lib-head svg { width: 18px; height: 18px; }
.find { display: flex; align-items: center; height: 43px; padding: 0 6px 0 8px; margin-bottom: 6px; }
.find .w30 svg { width: 20px; height: 20px; }
.find > .c8 { margin-left: -2px; color: #777; }
.search { flex: 1; min-width: 0; display: flex; align-items: center; height: 35px; margin: 0 6px 0 2px; border: 1px solid #ddd; border-radius: 3px; padding: 0 5px 0 9px; }
.search input { flex: 1; min-width: 0; border: 0; padding: 0; background: none; }
.search input::placeholder { color: #888; }
.search svg { width: 22px; height: 22px; color: #444; }
.updown { display: grid; gap: 5px; }
.updown button { width: 25px; height: 15px; border: 1px solid #ddd; border-radius: 3px; color: #666; }
.updown svg { width: 14px; height: 8px; stroke-width: 1.300; }
.lib-scroll { flex: 1; min-height: 0; display: flex; }
.lib-body { flex: 1; overflow: hidden; }
.lib .track i { height: 29px; }
.sec { display: flex; align-items: center; gap: 8px; height: 43px; background: #e0e0e0; padding: 0 5px 0 13px; color: #000; }
.sec h3 { flex: 1; font-size: 15px; }
.sec .tri { width: 10px; height: 8px; fill: #777; stroke: none; }
.sec h3 + .pb { color: #555; }
.sec h3 + .pb:last-child { color: #777; }
.hintwrap { padding: 14px 19px; }
.hint { border: 2px dashed #ccc; border-radius: 5px; padding: 6px 12px 6px 16px; line-height: 20px; color: #aaa; }
.shapes { display: grid; grid-template-columns: repeat(4, 60px); gap: 1px; padding: 4px 0 0 2px; justify-content: start; }
.shapes svg { width: 60px; height: 60px; fill: #fff; stroke: #aaa; stroke-width: 1.400; }
.shapes .dk { stroke: #777; stroke-width: 1; }
.shapes .bk { stroke: #333; stroke-width: 1; }
.shapes .in { fill: #f5f5f5; stroke-width: 1.500; }

/* document */
.doc { flex: 1; min-width: 0; display: flex; flex-direction: column; }
.doctabs { height: 31px; border-bottom: 1px solid #ddd; }
.doctab { display: flex; align-items: center; width: 200px; height: 30px; padding: 0 10px 0 14px; background: #c6c6c6; color: #0a7cff; }
.doctab span { margin-left: 9px; flex: 1; }
.dicon { width: 18px; height: 18px; stroke: none; }
.stage { flex: 1; min-height: 0; display: grid; grid-template: 21px 1fr 12px / 22px 1fr 13px; }
.corner, .hpad { background: #efefef; border-right: 1px solid #ddd; border-bottom: 1px solid #ddd; }
.hpad { border-top: 1px solid #ddd; }
.rulerh, .rulerv { width: 100%; height: 100%; background: #fafafa; stroke: #ccc; stroke-width: 1; }
.rulerh { border-bottom: 1px solid #ddd; }
.rulerv { border-right: 1px solid #ddd; }
.rulerh text, .rulerv text { font: 12px Roboto, sans-serif; fill: #777; stroke: none; }
.vtop { border-left: 1px solid #ddd; }
.canvas { position: relative; overflow: hidden; background: #e4e4e4; }
.vscroll { padding: 91px 1px 0 2px; }
.vscroll i { display: block; height: 285px; border-radius: 4px; background: #bbb; }
.hscroll { border: 1px solid #ddd; border-width: 1px 0; padding: 1px 0; }
.hscroll i { display: block; width: 129px; height: 8px; margin-left: 163px; border-radius: 4px; background: #bbb; }
.palette { display: flex; align-items: center; height: 21px; padding: 0 4px 0 10px; }
.palette svg { width: 17px; height: 17px; }
.swatches { flex: 1; display: flex; gap: 1px; height: 17px; margin-left: 11px; }
.swatches i { flex: 1; }

/* drawing on the page */
.page { position: absolute; left: -30px; right: 5px; top: 127px; height: 348px; padding: 0 0 0 30px; background: #fff; border: 1px solid #aaa; overflow: hidden; }
.badge { position: absolute; left: 23px; top: 6px; width: 53px; height: 53px; border-radius: 50%; background: #45bfe2; padding: 4px; z-index: 1; }
.badge span { display: flex; align-items: center; justify-content: center; height: 100%; border: 1px solid #fff; border-radius: 50%; color: #fff; font-size: 9px; line-height: 12px; font-weight: 700; }
.ptitle { padding: 12px 0 0 67px; font-size: 13px; line-height: 18px; height: 30px; font-weight: 500; color: #000; }
.rule { display: block; margin-left: 39px; height: 4px; }
.mag { width: 348px; background: #cd59b7; }
.blu { width: 411px; height: 5px; margin-top: 4px; background: #45bfe2; }
.cols { display: grid; grid-template-columns: repeat(6, 74px); padding: 26px 0 0 7px; }
.col { display: flex; flex-direction: column; align-items: center; color: var(--c); }
.c1 { --c: #f1486f; --t: #f9b0bd; } .c2 { --c: #45bfe2; --t: #b3dcf0; } .c3 { --c: #44cb82; --t: #b4e3c4; }
.c4 { --c: #f9c25c; --t: #fcdcb0; } .c5 { --c: #f5665e; --t: #fab6b4; } .c6 { --c: #fa894a; --t: #fcc3b0; }
.chev { align-self: flex-start; width: 76px; height: 52px; margin-left: 2px; fill: var(--c); stroke: none; }
.chev rect { fill: #fff; stroke: var(--c); stroke-width: 1; }
.chev .pic { fill: none; stroke: var(--c); stroke-width: 1.500; }
.chev .pic rect { stroke-width: 2; }
.chev .f { fill: var(--c); stroke: none; }
.chev text { font: 700 8px "Noto Sans CJK SC", sans-serif; fill: #fff; text-anchor: middle; }
.down { width: 16px; height: 15px; margin: 9px 0 11px; fill: #cd59b7; stroke: none; }
.box { position: relative; width: 66px; height: 140px; border: 1px solid var(--c); padding-top: 5px; display: flex; flex-direction: column; align-items: center; }
.box b { font-size: 7px; line-height: 10px; color: #111; width: 54px; text-align: center; border-bottom: 4px solid var(--t); white-space: nowrap; }
.box p { margin: auto 0; padding-bottom: 4px; width: 48px; font-size: 6px; line-height: 8px; color: #333; white-space: nowrap; }
.box::after { content: ""; position: absolute; left: 27px; bottom: -6px; width: 10px; height: 11px; border-radius: 50%; background: var(--c); }

/* side bar */
.side { width: 43px; border: 1px solid #ccc; border-width: 0 1px; display: flex; flex-direction: column; gap: 12px; overflow: hidden; }
.side button { height: 43px; color: #444; flex: none; }
.side .fold { height: 36px; margin-bottom: -9px; }
.side svg { width: 24px; height: 24px; stroke-width: 2.200; }
.side .on { background: #0a7cff; color: #fff; }

/* theme panel */
.theme { width: 352px; display: flex; flex-direction: column; min-height: 0; }
.theme h2 { height: 39px; line-height: 38px; text-align: center; background: #e0e0e0; font-size: 17px; font-weight: 700; color: #000; }
.theme-scroll { flex: 1; min-height: 0; display: flex; }
.theme-body { flex: 1; overflow: hidden; padding: 19px 18px 0; }
.theme .track i { height: 211px; }
.top { display: flex; }
.preview { width: 162px; height: 160px; background: #fff; border: 1px solid #ddd; stroke: none; }
.preview g { stroke-width: 1; }
.preview text { font: 15px "Noto Sans", sans-serif; stroke: none; }
.preview .lg { font-size: 18px; }
.props { padding: 0 0 0 37px; }
.props button { height: 40px; gap: 13px; color: #444; white-space: nowrap; }
.props svg, .kinds svg { width: 28px; height: 24px; color: #444; }
.kinds { display: grid; grid-template-columns: repeat(4, 78px); margin-top: 20px; }
.kinds button { height: 75px; flex-direction: column; gap: 13px; padding-bottom: 4px; color: #111; }
.kinds .on { background: #e0e0e0; }
.cards { display: grid; grid-template-columns: repeat(2, 150px); gap: 6px; margin-top: 24px; }
.flow { width: 150px; height: 122px; background: #fff; border: 1px solid #ddd; fill: #fff; stroke: #444; stroke-width: 1; }
.flow .h { fill: #222; stroke: #222; }
.thick { stroke: #2f2f2f; stroke-width: 2.600; }
.thick .h { stroke-width: 4; fill: #2f2f2f; stroke: #2f2f2f; }
.plain { stroke: #000; stroke-width: 1.200; }
.gray { stroke: #5a5a5a; stroke-width: 1.800; fill: #f2f2f2; }
.gray .h { fill: #5a5a5a; stroke: #5a5a5a; }
.green { stroke: #35b48c; stroke-width: 2.600; fill: #eef8f5; }
.mint { stroke: #cbe7de; fill: #cbe7de; }

/* status bar */
.status { display: flex; align-items: center; height: 41px; padding: 0 34px 0 23px; }
.pb .i28 { width: 28px; height: 24px; }
.pb .i24 { width: 24px; height: 24px; }
.status .pick { height: 26px; color: #111; }
.pg { width: 132px; margin: 0 8px 0 30px; padding-right: 4px; }
.pg .c8, .pct .c8 { right: 4px; color: #777; }
.status .bar { height: 30px; margin-left: -8px; }
.pagetab { margin: 0 29px 0 22px; font-size: 16px; font-weight: 700; color: #000; }
.zoom { margin-left: auto; display: flex; align-items: center; }
.out { margin: 0 7px 0 10px; }
.zoom input { appearance: none; width: 102px; height: 16px; margin: 0 7px 0 0; background: linear-gradient(#ddd, #ddd) center / 100% 4px no-repeat; }
.zoom input::-webkit-slider-thumb { appearance: none; width: 14px; height: 14px; border-radius: 50%; border: 2px solid #bbb; background: #fff; }
.pct { width: 52px; margin: 0 19px 0 17px; }
.pct .c8 { right: 0; }
.full { margin-right: 6px; }
```

FILE: script.js
```js
// Colour strip, five shades per hue, from the reds to the greys.
const hues = [
  "b01328 cf1237 ee4565 f86480 ff9aa5", "2a7f90 39a9c4 3fbfe2 56d7ee a0ecfb",
  "f5501f ff7635 ff951b ffb418 ffc35c", "10937a 12b89d 17cab2 57d0bb 84e5d1",
  "9c295f c9498c ed6aab fa83cb f3c1dd", "628a12 7fa124 9dbf30 b2cf4a cfdf91",
  "1b2aac 3545dd 6f42f5 8f6bfa ab93f8", "ffcc00 fad92c f1e92a f8f241 ffff8a",
  "9650da bb4de8 d064ef c27bff d8a4fb", "2d8045 3b9e55 4aaa6b 60bd86 8fd5ab",
  "e8322b ff4646 ff5f5f ff7373 ff8e8e", "2546a8 2b5bd8 2f6af5 5f8fff 8ab0f7",
  "7b2f00 9c3a00 a7492f d9603f e57552", "1c89d8 2d9bf5 3cabf9 3cceff 6be1ff",
  "7a4e35 9a6347 b87350 d68a60 f79c6c", "8a7d70 aea893 c9c5b4 e4dccb f5ecdc",
  "1a1a1a 333333 4a4a4a 5f5f5f 7a7a7a bdbdbd c8c8c8 dadada e6e6e6 f5f5f5 ffffff"
];
const strip = document.getElementById("swatches");
for (const shade of hues.join(" ").split(" ")) {
  const cell = document.createElement("i");
  cell.style.background = "#" + shade;
  strip.append(cell);
}
```
